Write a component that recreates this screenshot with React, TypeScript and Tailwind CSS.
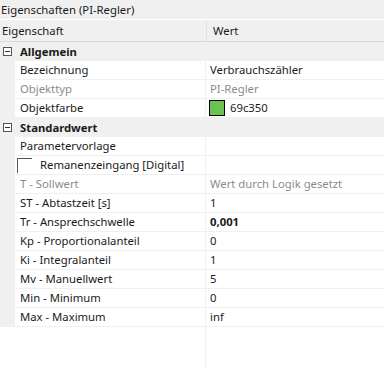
import { Fragment } from 'react';

type Row =
  | { kind: 'section'; label: string }
  | { kind: 'field'; label: string; value?: string; muted?: boolean; bold?: boolean; color?: string; check?: boolean };

const rows: Row[] = [
  { kind: 'section', label: 'Allgemein' },
  { kind: 'field', label: 'Bezeichnung', value: 'Verbrauchszähler' },
  { kind: 'field', label: 'Objekttyp', value: 'PI-Regler', muted: true },
  { kind: 'field', label: 'Objektfarbe', value: '69c350', color: '#69c350' },
  { kind: 'section', label: 'Standardwert' },
  { kind: 'field', label: 'Parametervorlage' },
  { kind: 'field', label: 'Remanenzeingang [Digital]', check: true },
  { kind: 'field', label: 'T - Sollwert', value: 'Wert durch Logik gesetzt', muted: true },
  { kind: 'field', label: 'ST - Abtastzeit [s]', value: '1' },
  { kind: 'field', label: 'Tr - Ansprechschwelle', value: '0,001', bold: true },
  { kind: 'field', label: 'Kp - Proportionalanteil', value: '0' },
  { kind: 'field', label: 'Ki - Integralanteil', value: '1' },
  { kind: 'field', label: 'Mv - Manuellwert', value: '5' },
  { kind: 'field', label: 'Min - Minimum', value: '0' },
  { kind: 'field', label: 'Max - Maximum', value: 'inf' },
];

function MinusBox() {
  return (
    <span className="relative w-[9px] h-[9px] border border-[#555555] bg-white shrink-0">
      <span className="absolute left-[1px] right-[1px] top-[3px] h-px bg-[#333333]" />
    </span>
  );
}

function SectionRow({ label }: { label: string }) {
  return (
    <div className="flex items-center h-[19px] bg-[#f0f0f0]">
      <span className="ml-[3px] flex">
        <MinusBox />
      </span>
      <span className="ml-[8px] font-bold text-[#1a1a1a]">{label}</span>
    </div>
  );
}

function FieldRow({ row }: { row: Extract<Row, { kind: 'field' }> }) {
  const text = row.muted ? 'text-[#8c8c8c]' : 'text-[#1a1a1a]';
  return (
    <div className="flex h-[19px]">
      <div className="w-[15px] bg-[#f0f0f0] shrink-0" />
      <div className="flex flex-1 bg-white border-b border-[#f0f0f0]">
        <div className={`w-[191px] shrink-0 flex items-center border-r border-[#f0f0f0] pl-[5px] ${text}`}>
          {row.check ? (
            <>
              <span className="w-[15px] h-[15px] border-t border-l border-[#555555] ml-[-3px] mt-[2px] self-start" />
              <span className="ml-[8px]">{row.label}</span>
            </>
          ) : (
            row.label
          )}
        </div>
        <div className={`flex-1 flex items-center pl-[4px] ${text} ${row.bold ? 'font-bold' : ''}`}>
          {row.color && (
            <span
              className="w-[16px] h-[16px] border border-black mr-[5px] ml-[-1px]"
              style={{ backgroundColor: row.color }}
            />
          )}
          {row.value}
        </div>
      </div>
    </div>
  );
}

export default function App() {
  return (
    <div
      className="w-[384px] h-[368px] bg-white flex flex-col overflow-hidden text-[11.3px] leading-none"
      style={{ fontFamily: '"Noto Sans", "Open Sans", sans-serif' }}
    >
      <div className="h-[19px] bg-[#f0f0f0] flex items-center pl-[1px] text-[#1a1a1a]">
        Eigenschaften (PI-Regler)
      </div>
      <div className="h-px bg-white" />
      <div className="h-[22px] flex bg-[#f0f0f0] border-b border-[#d9d9d9] text-[#1a1a1a]">
        <div className="w-[207px] flex items-center pl-[2px] border-r border-[#e2e2e2]">Eigenschaft</div>
        <div className="flex-1 flex items-center pl-[6px]">Wert</div>
      </div>
      {rows.map((row, i) => (
        <Fragment key={i}>
          {row.kind === 'section' ? <SectionRow label={row.label} /> : <FieldRow row={row} />}
        </Fragment>
      ))}
      <div className="flex-1 flex">
        <div className="w-[206px] border-r border-[#f0f0f0]" />
        <div className="flex-1" />
      </div>
    </div>
  );
}
